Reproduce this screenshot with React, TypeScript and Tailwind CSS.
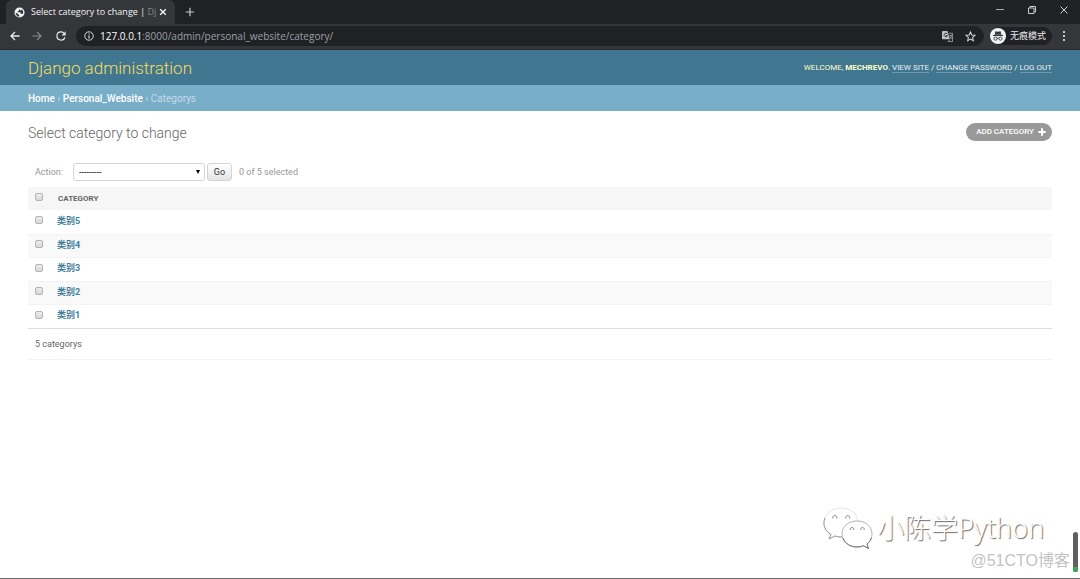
import { useState } from "react";

const categories = ["类别5", "类别4", "类别3", "类别2", "类别1"];

const checkboxClass =
  "block size-2 appearance-none rounded-[2px] border border-[#b4b4b4] bg-linear-to-b from-[#ececec] to-[#d8d8d8] checked:bg-[#417690] checked:bg-none";

function GlobeIcon() {
  return (
    <svg viewBox="0 0 24 24" className="size-[11px] shrink-0" aria-hidden="true">
      <circle cx="12" cy="12" r="11" fill="#f1f3f4" />
      <path
        fill="#35363a"
        d="M3.500 12l5 2.500v1.500l3 1.500v3.500C7 21 3.500 17 3.500 12zM12 3.500c1.500 1.500 0 2.500-1.500 3v2l-2.500 1.500v1.500h5.500l1.500 3h2.500l1.500 1.500c2-4.500 1-8.500-2-10.500l-1.500 2h-1.500z"
      />
    </svg>
  );
}

function TabStrip() {
  return (
    <div className="flex h-6 items-stretch bg-[#202124] text-[#dee1e6]">
      <div className="ml-1.5 flex w-[169px] items-center rounded-t-md bg-[#35363a] pr-2 pl-2">
        <GlobeIcon />
        <span className="ml-1.5 text-[9px] whitespace-nowrap text-[#f1f3f4]">
          Select category to change | <span className="text-[#85878a]">Dj</span>
        </span>
        <button aria-label="Close tab" className="ml-auto">
          <svg viewBox="0 0 8 8" className="size-2" stroke="#f1f3f4" strokeWidth="1.400">
            <path d="M1.200 1.200l5.600 5.600M6.800 1.200L1.200 6.800" />
          </svg>
        </button>
      </div>
      <button aria-label="New tab" className="ml-2.5">
        <svg viewBox="0 0 10 10" className="size-2.5" stroke="#c8cacd" strokeWidth="1.200">
          <path d="M5 .8v8.400M.8 5h8.400" />
        </svg>
      </button>
      <div className="mr-3 ml-auto flex items-center gap-6 pb-1">
        <button aria-label="Minimize">
          <svg viewBox="0 0 8 8" className="size-2" stroke="#a9abae" fill="none">
            <path d="M0 3.500h8" />
          </svg>
        </button>
        <button aria-label="Restore">
          <svg viewBox="0 0 8 8" className="size-2" stroke="#c8cacd" fill="none">
            <path d="M.5 2h5.500v5.500H.5zM2 2V.5h5.500V6H6" />
          </svg>
        </button>
        <button aria-label="Close">
          <svg viewBox="0 0 8 8" className="size-2" stroke="#d4d6d9" fill="none">
            <path d="M.5.5l7 7M7.500.5l-7 7" />
          </svg>
        </button>
      </div>
    </div>
  );
}

function Toolbar() {
  return (
    <div className="flex h-[26px] items-center border-b border-[#27282b] bg-[#35363a] pr-3.5 pb-px pl-2.5 text-[#e8eaed]">
      <nav className="flex items-center gap-3" aria-label="Browser">
        <button aria-label="Back">
          <svg viewBox="0 0 10 10" className="size-2.5" stroke="#e8eaed" strokeWidth="1.300" fill="none">
            <path d="M9.600 5H1.200M5 1L1 5l4 4" />
          </svg>
        </button>
        <button aria-label="Forward">
          <svg viewBox="0 0 10 10" className="size-2.5" stroke="#85878a" strokeWidth="1.200" fill="none">
            <path d="M.4 5h8.400M5 1l4 4-4 4" />
          </svg>
        </button>
        <button aria-label="Reload">
          <svg viewBox="0 0 24 24" className="size-3.5" fill="#e8eaed">
            <path d="M17.650 6.350A7.958 7.958 0 0 0 12 4a8 8 0 1 0 7.730 10h-2.080A6 6 0 1 1 12 6c1.660 0 3.140.69 4.220 1.780L13 11h7V4z" />
          </svg>
        </button>
      </nav>
      <div className="ml-2 flex h-5 flex-1 items-center rounded-full bg-[#202124] pr-2 pl-2">
        <svg viewBox="0 0 10 10" className="size-2.5" fill="none" stroke="#d5d7da" aria-hidden="true">
          <circle cx="5" cy="5" r="4.200" />
          <path d="M5 4.400v3M5 2.500v1.100" strokeWidth="1.200" />
        </svg>
        <input
          aria-label="Address"
          className="sr-only"
          readOnly
          value="127.0.0.1:8000/admin/personal_website/category/"
        />
        <span className="ml-1.5 text-[10px] leading-5 text-[#9aa0a6]">
          <span className="text-white">127.0.0.1</span>
          :8000/admin/personal_website/category/
        </span>
        <div className="ml-auto flex items-center gap-3">
          <button aria-label="Translate">
            <svg viewBox="0 0 12 12" className="size-[11px]" aria-hidden="true">
              <path fill="#bfc1c4" d="M1 0h5l2.500 9H1a1 1 0 0 1-1-1V1a1 1 0 0 1 1-1z" />
              <path fill="none" stroke="#202124" strokeWidth=".9" d="M5.700 3.200A1.900 1.900 0 1 0 6 5H4.200" />
              <path fill="none" stroke="#a5a7aa" strokeWidth=".9" d="M7.300 2.500h4.200v9H6.500l2-2M8 5h3M9.500 4v1M10.500 5c0 2-1.500 3-2.500 3.500M8.500 6l2 2.500" />
            </svg>
          </button>
          <button aria-label="Bookmark">
            <svg viewBox="0 0 12 12" className="size-[11px]" fill="none" stroke="#d5d7da" strokeWidth="1.100">
              <path d="M6 1l1.400 3.300 3.600.3-2.700 2.400.8 3.500L6 8.700l-3.100 1.800.8-3.500L1 4.600l3.600-.3z" />
            </svg>
          </button>
        </div>
      </div>
      <div className="ml-1.5 flex h-[18px] items-center rounded-full bg-[#202124] pr-1.5">
        <svg viewBox="0 0 16 16" className="size-4" aria-hidden="true">
          <circle cx="8" cy="8" r="8" fill="#f1f3f4" />
          <path fill="#35363a" d="M5.500 3.200l2.500.5 2.500-.5 1 3.500h-7zM3 7h10v.9H3z" />
          <g fill="none" stroke="#35363a" strokeWidth=".9">
            <circle cx="5.500" cy="10.600" r="1.600" />
            <circle cx="10.500" cy="10.600" r="1.600" />
            <path d="M7.100 10.300q.9-.5 1.800 0" />
          </g>
        </svg>
        <span className="ml-1 text-[9px]">无痕模式</span>
      </div>
      <button aria-label="Menu" className="ml-2.5">
        <svg viewBox="0 0 4 12" className="h-3 w-1" fill="#e8eaed">
          <circle cx="2" cy="2" r="1.100" />
          <circle cx="2" cy="6" r="1.100" />
          <circle cx="2" cy="10" r="1.100" />
        </svg>
      </button>
    </div>
  );
}

function UserLink({ children }: { children: string }) {
  return (
    <a href="#" className="border-b border-white/25 text-white/90">
      {children}
    </a>
  );
}

function Watermarks() {
  return (
    <>
      <div className="pointer-events-none absolute right-9 bottom-7 flex items-center gap-1">
        <svg viewBox="0 0 50 44" className="h-11 w-[50px]" fill="white" aria-hidden="true">
          <path
            stroke="#dcdcdc"
            strokeWidth=".8"
            d="M18 2C8.500 2 1 8.500 1 17c0 5 2.500 9 7 11.500L6 33l6-3c2 .7 4 1 7 1 9 0 16-6.500 16-14.500C35 8.500 27.500 2 18 2z"
          />
          <path
            fill="none"
            stroke="#999"
            d="M2 12c-3 7 .5 13.500 6 16.500L6 33l6-3c2.500.8 5 1 7 1"
          />
          <path
            stroke="#a8a8a8"
            strokeWidth=".9"
            d="M34 15c-8.500 0-15 5.500-15 13s6.500 13 15 13c2.500 0 4.500-.4 6.500-1.200l5 2.700-1.500-4.500c3.500-2.500 5-6 5-10 0-7.500-6.500-13-15-13z"
          />
          <path
            fill="none"
            stroke="#777"
            d="M20 32c2 5.500 7.500 9 14 9 2.500 0 4.500-.4 6.500-1.200l5 2.700-1.500-4.500c2-1.500 3.500-3.500 4.300-6"
          />
          <path
            stroke="#808080"
            d="M10 12.500a2 2 0 1 1 3.500 0M23 12.500a2 2 0 1 1 3.500 0M27.500 24a1.700 1.700 0 1 1 3 0M38 24a1.700 1.700 0 1 1 3 0"
          />
        </svg>
        <span className="font-['Noto_Sans','Noto_Sans_CJK_SC',sans-serif] text-[27px] leading-10 font-light whitespace-nowrap text-white [text-shadow:1px_1px_1px_rgba(0,0,0,0.6)]">
          小陈学Python
        </span>
      </div>
      <span className="pointer-events-none absolute right-2.5 bottom-[7px] font-['Liberation_Sans','Noto_Sans_CJK_SC',sans-serif] text-base leading-5 whitespace-nowrap text-[#c3c3c3]">
        @51CTO博客
      </span>
      <div className="pointer-events-none absolute right-0.5 bottom-1.5 flex h-10 w-[5px] flex-col justify-end overflow-hidden rounded-full bg-[#606060]">
        <div className="h-[5px] bg-[#3da558]" />
      </div>
    </>
  );
}

export default function App() {
  const [selected, setSelected] = useState<string[]>([]);
  const toggle = (name: string) =>
    setSelected((s) => (s.includes(name) ? s.filter((n) => n !== name) : [...s, name]));

  return (
    <div className="relative flex min-h-screen flex-col border-b border-[#686868] bg-white font-[Roboto,'Noto_Sans_CJK_SC',sans-serif] text-[9px] leading-3 text-[#333]">
      <div className="font-['Open_Sans','Noto_Sans_CJK_SC',sans-serif]">
        <TabStrip />
        <Toolbar />
      </div>

      <header className="flex h-[35px] items-center justify-between bg-[#417690] px-7">
        <h1 className="text-[17px] leading-5 font-light text-[#f5dd5d]">Django administration</h1>
        <div className="text-[8px] text-[#ffc] uppercase">
          Welcome, <strong>Mechrevo</strong>. <UserLink>View site</UserLink> /{" "}
          <UserLink>Change password</UserLink> / <UserLink>Log out</UserLink>
        </div>
      </header>

      <nav aria-label="Breadcrumb" className="flex h-[26px] items-center bg-[#79aec8] px-7 pt-0.5 text-[10px] text-[#c4dce8]">
        <div>
          <a href="#" className="font-medium text-white">Home</a> ›{" "}
          <a href="#" className="font-medium text-white">Personal_Website</a> › Categorys
        </div>
      </nav>

      <main className="px-7 pt-3">
        <div className="flex items-start justify-between">
          <h2 className="text-[14px] leading-5 font-light text-[#666]">Select category to change</h2>
          <a
            href="#"
            className="flex h-[18px] items-center gap-1 rounded-full bg-[#999] pr-1.5 pl-2.5 text-[8px] font-medium text-white uppercase"
          >
            Add category
            <svg viewBox="0 0 8 8" className="size-2" stroke="white" strokeWidth="2" aria-hidden="true">
              <path d="M4 .3v7.400M.3 4h7.400" />
            </svg>
          </a>
        </div>

        <form className="mt-5 flex items-center pl-[7px] text-[#999]" onSubmit={(e) => e.preventDefault()}>
          <label htmlFor="action">Action:</label>
          <div className="relative ml-2.5">
            <select
              id="action"
              className="block h-[18px] w-[132px] appearance-none rounded-[3px] border border-[#d4d4d4] bg-white pl-[5px] text-[9px] text-black"
            >
              <option>---------</option>
              <option>Delete selected categorys</option>
            </select>
            <svg viewBox="0 0 4 4" className="pointer-events-none absolute top-[7px] right-[5px] size-1" aria-hidden="true">
              <path d="M0 0h4L2 4z" />
            </svg>
          </div>
          <button className="ml-0.5 h-[18px] w-[25px] rounded-[3px] border border-[#d4d4d4] bg-linear-to-b from-white to-[#e4e4e4] text-[#333]">
            Go
          </button>
          <span className="ml-[7px]">{selected.length} of 5 selected</span>
        </form>

        <table className="mt-1.5 w-full border-collapse text-left">
          <thead>
            <tr className="h-[23px] bg-[#f6f6f6]">
              <th className="w-[29px] pb-[3px] pl-[7px]">
                <input
                  type="checkbox"
                  aria-label="Select all"
                  className={checkboxClass}
                  checked={selected.length === categories.length}
                  onChange={(e) => setSelected(e.target.checked ? categories : [])}
                />
              </th>
              <th className="pl-px text-[8px] font-bold text-[#666] uppercase">Category</th>
            </tr>
          </thead>
          <tbody>
            {categories.map((name) => (
              <tr
                key={name}
                className="h-6 border-b border-[#f3f3f3] last:border-[#ddd] even:h-[23px] even:bg-[#f9f9f9]"
              >
                <td className="pb-[3px] pl-[7px]">
                  <input
                    type="checkbox"
                    aria-label={name}
                    className={checkboxClass}
                    checked={selected.includes(name)}
                    onChange={() => toggle(name)}
                  />
                </td>
                <th className="pb-0.5">
                  <a href="#" className="font-bold text-[#447e9b]">{name}</a>
                </th>
              </tr>
            ))}
          </tbody>
        </table>
        <p className="border-b border-[#f3f3f3] py-[9px] pl-[7px] text-[#666]">{categories.length} categorys</p>
      </main>

      <Watermarks />
    </div>
  );
}
